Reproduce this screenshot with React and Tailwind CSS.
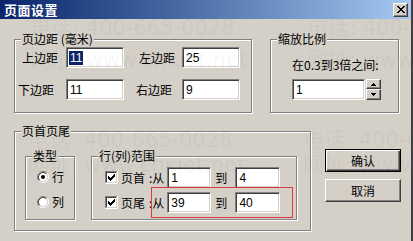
import React from 'react';

const cjk = "font-['Noto_Sans_CJK_SC',sans-serif]";
const sunken =
  'bg-white border border-t-[#808080] border-l-[#808080] border-b-white border-r-white shadow-[inset_1px_1px_0_#404040,inset_-1px_-1px_0_#d4d0c8]';

const Group = ({ title, className, children }) => (
  <div
    className={`relative border border-[#808080] shadow-[inset_1px_1px_0_#fff,1px_1px_0_#fff] ${className}`}
  >
    <span className="absolute -top-[8px] left-[6px] px-[1px] bg-[#d4d0c8] text-[12px] leading-[14px] text-black whitespace-nowrap">
      {title}
    </span>
    {children}
  </div>
);

const Field = ({ className, value, selected }) => (
  <div
    className={`h-[21px] flex items-center pl-[2px] font-['Liberation_Sans',sans-serif] text-[12px] text-black ${sunken} ${className}`}
  >
    {selected ? (
      <span className="bg-[#0a246a] text-white leading-[14px] px-[1px]">{value}</span>
    ) : (
      <span className="leading-[14px] px-[1px]">{value}</span>
    )}
  </div>
);

const Radio = ({ checked }) => (
  <svg width="12" height="12" viewBox="0 0 12 12">
    <circle cx="6" cy="6" r="4.5" fill="#fff" />
    <path d="M2.11 9.89 A5.5 5.5 0 0 1 9.89 2.11" stroke="#808080" fill="none" />
    <path d="M9.89 2.11 A5.5 5.5 0 0 1 2.11 9.89" stroke="#fff" fill="none" />
    <path d="M2.82 9.18 A4.5 4.5 0 0 1 9.18 2.82" stroke="#404040" fill="none" />
    <path d="M9.18 2.82 A4.5 4.5 0 0 1 2.82 9.18" stroke="#d4d0c8" fill="none" />
    {checked && <circle cx="6" cy="6" r="2" fill="#000" />}
  </svg>
);

const Check = () => (
  <svg width="13" height="13" viewBox="0 0 13 13" shapeRendering="crispEdges">
    <rect x="0" y="0" width="13" height="13" fill="#fff" />
    <rect x="0" y="0" width="12" height="1" fill="#808080" />
    <rect x="0" y="0" width="1" height="12" fill="#808080" />
    <rect x="1" y="1" width="10" height="1" fill="#404040" />
    <rect x="1" y="1" width="1" height="10" fill="#404040" />
    <rect x="1" y="11" width="11" height="1" fill="#d4d0c8" />
    <rect x="11" y="1" width="1" height="11" fill="#d4d0c8" />
    <path
      d="M3 5h1v3H3zM4 6h1v3H4zM5 7h1v3H5zM6 6h1v3H6zM7 5h1v3H7zM8 4h1v3H8zM9 3h1v3H9z"
      fill="#000"
    />
  </svg>
);

const SpinBtn = ({ up, className }) => (
  <div
    className={`w-[15px] flex items-center justify-center bg-[#d4d0c8] border border-t-white border-l-white border-b-[#404040] border-r-[#404040] shadow-[inset_-1px_-1px_0_#808080] ${className}`}
  >
    <svg width="5" height="3" viewBox="0 0 5 3" shapeRendering="crispEdges">
      {up ? (
        <path d="M2 0h1v1h1v1h1v1H0V2h1V1h1z" fill="#000" />
      ) : (
        <path d="M0 0h5v1H4v1H3v1H2V2H1V1H0z" fill="#000" />
      )}
    </svg>
  </div>
);

// faint watermark lines laid over the dialog
const Watermark = ({ className, children }) => (
  <div
    className={`absolute pointer-events-none whitespace-nowrap font-['DejaVu_Sans','Noto_Sans_CJK_SC',sans-serif] text-[21px] leading-none text-black/[0.05] ${className}`}
  >
    {children}
  </div>
);

export default function App() {
  return (
    <div className={`w-[413px] h-[241px] overflow-hidden bg-white ${cjk}`}>
      <div className="relative w-[413px] h-[241px] bg-[#d4d0c8] border-r-2 border-r-[#404040] overflow-hidden text-[12px] text-black">
        {/* title bar */}
        <div className="h-[19px] flex items-center pl-[4px] pr-[3px] bg-linear-to-r from-[#0a246a] to-[#a6caf0]">
          <span className="text-white font-bold text-[13px] leading-[15px] tracking-[0.5px]">页面设置</span>
          <div className="ml-auto w-[15px] h-[14px] flex items-center justify-center bg-[#d4d0c8] border border-t-white border-l-white border-b-[#404040] border-r-[#404040] shadow-[inset_-1px_-1px_0_#808080]">
            <svg width="8" height="7" viewBox="0 0 8 7" shapeRendering="crispEdges">
              <path
                d="M0 0h2v1h1v1h2V1h1V0h2v1H7v1H6v1H5v1h1v1h1v1h1v1H6V6H5V5H3v1H2v1H0V6h1V5h1V4h1V3H2V2H1V1H0z"
                fill="#000"
              />
            </svg>
          </div>
        </div>

        {/* top row */}
        <div className="flex pt-[20px]">
          <Group title="页边距 (毫米)" className="ml-[14px] w-[238px] h-[74px] pt-[7px]">
            <div className="flex items-center h-[21px]">
              <span className="ml-[7px] leading-[14px]">上边距</span>
              <Field className="ml-[8px] w-[58px]" value="11" selected />
              <span className="ml-[15px] leading-[14px]">左边距</span>
              <Field className="ml-[7px] w-[58px]" value="25" />
            </div>
            <div className="flex items-center h-[21px] mt-[11px]">
              <span className="ml-[3px] leading-[14px]">下边距</span>
              <Field className="ml-[12px] w-[58px]" value="11" />
              <span className="ml-[12px] leading-[14px]">右边距</span>
              <Field className="ml-[10px] w-[58px]" value="9" />
            </div>
          </Group>

          <Group title="缩放比例" className="ml-[18px] w-[129px] h-[74px] pt-[18px] pl-[21px]">
            <div className="leading-[14px] whitespace-nowrap">在0.3到3倍之间:</div>
            <div className="flex mt-[7px]">
              <Field className="w-[73px]" value="1" />
              <div className="ml-[1px] flex flex-col h-[21px]">
                <SpinBtn up className="h-[10px]" />
                <SpinBtn className="h-[11px]" />
              </div>
            </div>
          </Group>
        </div>

        {/* bottom row */}
        <div className="flex mt-[18px]">
          <Group title="页首页尾" className="ml-[14px] w-[297px] h-[100px] pt-[24px] pl-[10px]">
            <div className="flex">
              <Group title="类型" className="w-[50px] h-[64px] pt-[14px] pl-[11px]">
                <div className="flex items-center h-[12px]">
                  <Radio checked />
                  <span className="ml-[3px] leading-[14px]">行</span>
                </div>
                <div className="flex items-center h-[12px] mt-[13px]">
                  <Radio />
                  <span className="ml-[3px] leading-[14px]">列</span>
                </div>
              </Group>

              <Group title="行(列)范围" className="ml-[16px] w-[206px] h-[64px] pt-[10px] pl-[13px]">
                <div className="flex items-center h-[21px]">
                  <Check />
                  <span className="ml-[3px] leading-[14px]">页首</span>
                  <span className="ml-[4px] leading-[14px]">:从</span>
                  <Field className="ml-[3px] w-[44px]" value="1" />
                  <span className="ml-[4px] leading-[14px]">到</span>
                  <Field className="ml-[8px] w-[45px]" value="4" />
                </div>
                <div className="flex items-center h-[21px] mt-[4px]">
                  <Check />
                  <span className="ml-[3px] leading-[14px]">页尾</span>
                  <span className="ml-[4px] leading-[14px]">:从</span>
                  <Field className="ml-[3px] w-[44px]" value="39" />
                  <span className="ml-[4px] leading-[14px]">到</span>
                  <Field className="ml-[8px] w-[45px]" value="40" />
                </div>
                <div className="absolute left-[59px] top-[30px] w-[142px] h-[31px] border border-[#dd3b3b] pointer-events-none" />
              </Group>
            </div>
          </Group>

          <div className="ml-[14px] mt-[18px] flex flex-col gap-[7px]">
            <div className="w-[76px] h-[23px] border border-black bg-[#d4d0c8] shadow-[inset_1px_1px_0_#fff,inset_-1px_-1px_0_#404040,inset_-2px_-2px_0_#808080] flex items-center justify-center leading-[14px]">
              确认
            </div>
            <div className="w-[76px] h-[23px] border border-t-white border-l-white border-b-[#404040] border-r-[#404040] bg-[#d4d0c8] shadow-[inset_-1px_-1px_0_#808080] flex items-center justify-center leading-[14px]">
              取消
            </div>
          </div>
        </div>

        <Watermark className="left-[30px] top-[18px]">电话: 400-665-0028</Watermark>
        <Watermark className="left-[30px] top-[50px]">网址: www.cnkiet.net</Watermark>
        <Watermark className="left-[307px] top-[18px]">电话: 400-665-0028</Watermark>
        <Watermark className="left-[307px] top-[50px]">网址: www.cnkiet.net</Watermark>
        <Watermark className="left-[28px] top-[130px]">电话: 400-665-0028</Watermark>
        <Watermark className="left-[28px] top-[155px]">网址: www.cnkiet.net</Watermark>
        <Watermark className="left-[303px] top-[130px]">电话: 400-665-0028</Watermark>
        <Watermark className="left-[303px] top-[155px]">网址: www.cnkiet.net</Watermark>
      </div>
    </div>
  );
}
